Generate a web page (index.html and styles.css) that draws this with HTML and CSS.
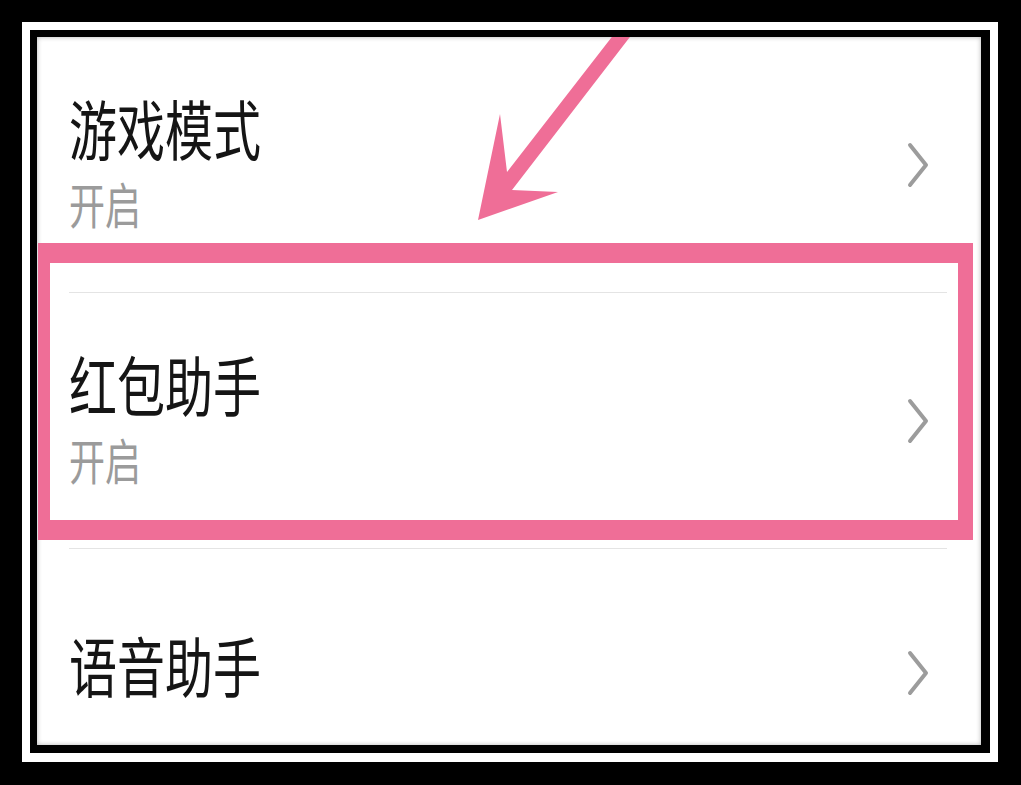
FILE: index.html
```html
<!DOCTYPE html>
<html lang="zh-CN">
<head>
<meta charset="utf-8">
<title>设置</title>
<link rel="stylesheet" href="styles.css">
</head>
<body>
<div class="outer">
  <div class="band">
    <div class="inner">
      <div class="content">
        <div class="row">
          <div class="text">
            <div class="title"><span>游戏模式</span></div>
            <div class="sub"><span>开启</span></div>
          </div>
          <svg class="chev" width="22" height="46" viewBox="0 0 22 46"><polyline points="3,3 19,23 3,43" fill="none" stroke="#9c9c9c" stroke-width="4" stroke-linecap="round" stroke-linejoin="round"/></svg>
        </div>
        <div class="row">
          <div class="text">
            <div class="title"><span>红包助手</span></div>
            <div class="sub"><span>开启</span></div>
          </div>
          <svg class="chev" width="22" height="46" viewBox="0 0 22 46"><polyline points="3,3 19,23 3,43" fill="none" stroke="#9c9c9c" stroke-width="4" stroke-linecap="round" stroke-linejoin="round"/></svg>
        </div>
        <div class="row row-last">
          <div class="text">
            <div class="title"><span>语音助手</span></div>
          </div>
          <svg class="chev" width="22" height="46" viewBox="0 0 22 46"><polyline points="3,3 19,23 3,43" fill="none" stroke="#9c9c9c" stroke-width="4" stroke-linecap="round" stroke-linejoin="round"/></svg>
        </div>
        <div class="highlight"></div>
        <svg class="arrow" width="944" height="708" viewBox="37 37 944 708"><polygon points="625,20 643,20 512,190 558,192 478,220 500,114 507,172" fill="#ef6e97"/></svg>
      </div>
    </div>
  </div>
</div>
</body>
</html>
```

FILE: styles.css
```css
html, body {
  margin: 0;
  padding: 0;
  background: #000;
}
.outer {
  width: 1021px;
  height: 785px;
  box-sizing: border-box;
  background: #000;
  padding: 22px 23px 23px 22px;
}
.band {
  height: 100%;
  box-sizing: border-box;
  background: #fff;
  padding: 8px 8px 9px 8px;
}
.inner {
  height: 100%;
  box-sizing: border-box;
  border-style: solid;
  border-color: #000;
  border-width: 7px 9px 8px 7px;
}
.content {
  position: relative;
  height: 100%;
  background: #fff;
  overflow: hidden;
  box-shadow: inset 0 0 5px rgba(0, 0, 0, 0.3);
  font-family: "Noto Sans CJK SC", "Noto Sans", sans-serif;
}
.row {
  display: flex;
  align-items: center;
  justify-content: space-between;
  height: 255px;
  margin: 0 34px 0 32px;
  border-bottom: 1px solid #e4e4e4;
}
.row-last {
  height: 248px;
  border-bottom: none;
}
.text {
  align-self: flex-start;
  margin-top: 57px;
}
.row-last .text {
  margin-top: 82px;
}
.title {
  height: 48px;
  font-size: 48px;
  line-height: 48px;
  color: #151515;
}
.sub {
  margin-top: 36px;
  height: 36px;
  font-size: 36px;
  line-height: 36px;
  color: #9b9b9b;
}
.title span,
.sub span {
  display: inline-block;
  white-space: nowrap;
  transform: scaleY(1.36);
  transform-origin: left top;
}
.chev {
  display: block;
  margin-right: 18px;
}
.highlight {
  position: absolute;
  left: 1px;
  top: 206px;
  width: 935px;
  height: 297px;
  box-sizing: border-box;
  border-style: solid;
  border-color: #ef6e97;
  border-width: 20px 15px 20px 12px;
}
.arrow {
  position: absolute;
  left: 0;
  top: 0;
}
```
